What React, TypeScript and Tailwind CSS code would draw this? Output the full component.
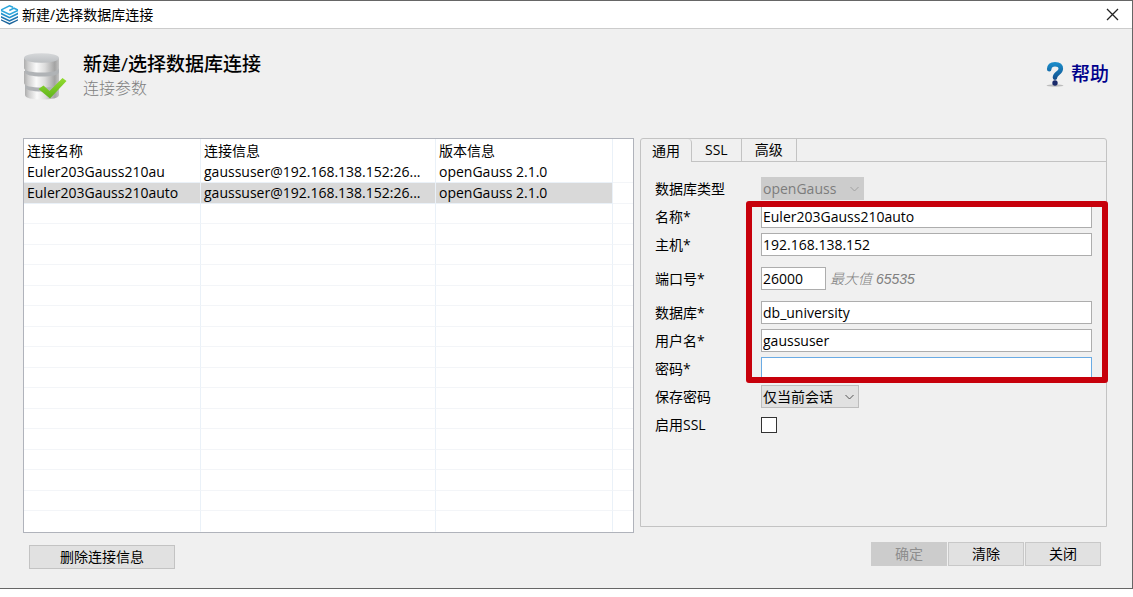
import { useState } from "react";
import type { ReactNode } from "react";

const connections = [
  { name: "Euler203Gauss210au", info: "gaussuser@192.168.138.152:26...", version: "openGauss 2.1.0" },
  { name: "Euler203Gauss210auto", info: "gaussuser@192.168.138.152:26...", version: "openGauss 2.1.0" },
];

const emptyRows = Array.from({ length: 16 }, (_, i) => i);

const inputClass =
  "h-[23px] w-full min-w-0 rounded-none border border-[#adadad] bg-white px-px text-black outline-none";

const LogoIcon = () => (
  <svg width="19" height="20" viewBox="0 0 19 20" fill="none" aria-hidden="true">
    <path d="M1 14.2 9.500 18 18 14.2v1.400L9.500 19.800 1 15.600z" fill="#17629a" />
    <path d="M1 11 9.500 15 18 11v1.700L9.500 16.700 1 12.700z" fill="#1b74b0" />
    <path d="M1 7.600 9.500 11.800 18 7.600v1.800L9.500 13.500 1 9.400z" fill="#2391cb" />
    <path
      d="m13 2.300-3.500-1.500L1.700 4.700v1L9.500 9.500l7.800-3.800v-1l-3.300-1.500-4.700 2.300"
      stroke="#2ba6dc"
      strokeWidth="1.500"
    />
  </svg>
);

const DatabaseIcon = () => (
  <svg width="44" height="50" viewBox="0 0 44 50" aria-hidden="true">
    <defs>
      <linearGradient id="metal" x1="0" x2="1" y1="0" y2="0">
        <stop offset="0" stopColor="#adadad" />
        <stop offset="0.12" stopColor="#cfcfcf" />
        <stop offset="0.35" stopColor="#fafafa" />
        <stop offset="0.6" stopColor="#dcdcdc" />
        <stop offset="0.88" stopColor="#a3a3a3" />
        <stop offset="1" stopColor="#c4c4c4" />
      </linearGradient>
      <linearGradient id="lid" x1="0" x2="0" y1="0" y2="1">
        <stop offset="0" stopColor="#d6d8da" />
        <stop offset="1" stopColor="#bbbec1" />
      </linearGradient>
      <linearGradient id="tick" x1="0" x2="0" y1="0" y2="1">
        <stop offset="0" stopColor="#92dc2f" />
        <stop offset="1" stopColor="#5fb31c" />
      </linearGradient>
    </defs>
    <path d="M2 34v9c0 3 7 4.500 17 4.500S36 46 36 43v-9z" fill="url(#metal)" />
    <path d="M2 31v4c0 3 7 4.500 17 4.500S36 38 36 35v-4z" fill="#b0b3b6" />
    <path d="M1 19v12c0 3 7.500 4.500 17.500 4.500S36 34 36 31V19z" fill="url(#metal)" />
    <path d="M2 15v5c0 3 7 4.500 17 4.500S36 23 36 20v-5z" fill="#b0b3b6" />
    <path d="M1 6v10c0 3 7.500 4.500 17.500 4.500S36 19 36 16V6z" fill="url(#metal)" />
    <ellipse cx="18.500" cy="6" rx="17.500" ry="4.800" fill="url(#lid)" />
    <path d="m15.500 37 5-3.500 6 5.500L39.500 26l4 3L27 46.500z" fill="url(#tick)" />
  </svg>
);

const HelpIcon = () => (
  <svg width="18" height="26" viewBox="0 0 18 26" fill="none" aria-hidden="true">
    <defs>
      <linearGradient id="question" x1="0" x2="0" y1="0" y2="26" gradientUnits="userSpaceOnUse">
        <stop offset="0" stopColor="#1c93cf" />
        <stop offset="0.55" stopColor="#14619f" />
        <stop offset="1" stopColor="#1a2460" />
      </linearGradient>
    </defs>
    <ellipse cx="9" cy="24.500" rx="8.500" ry="1.200" fill="#bcbcbc" />
    <path
      d="M3.200 8.200c.2-3.400 2.700-4.900 5.800-4.900 3.600 0 5.800 1.600 5.800 4.500 0 4.300-5.800 4.400-5.800 8.800"
      stroke="url(#question)"
      strokeWidth="4.600"
      strokeLinecap="round"
    />
    <circle cx="9" cy="22" r="2.700" fill="#1a2a6a" />
  </svg>
);

const Chevron = ({ color }: { color: string }) => (
  <svg
    className="pointer-events-none absolute right-1 top-1/2 -translate-y-1/2"
    width="11"
    height="7"
    viewBox="0 0 11 7"
    fill="none"
    aria-hidden="true"
  >
    <path d="M1.500 1.500 5.500 5.500 9.500 1.500" stroke={color} />
  </svg>
);

const Field = ({ id, label, children }: { id: string; label: string; children: ReactNode }) => (
  <div className="flex min-h-[23px] items-center">
    <label htmlFor={id} className="w-[106px] shrink-0">
      {label}
    </label>
    {children}
  </div>
);

const TitleBar = () => (
  <div className="flex h-7 items-center justify-between border-b border-[#cccccc] bg-white pr-[9px]">
    <div className="flex items-center gap-[3px]">
      <LogoIcon />
      <span>新建/选择数据库连接</span>
    </div>
    <button type="button" aria-label="关闭窗口" className="p-1">
      <svg width="13" height="13" viewBox="0 0 13 13" aria-hidden="true">
        <path d="m1 1 11 11M12 1 1 12" stroke="#222" strokeWidth="1.300" />
      </svg>
    </button>
  </div>
);

const Header = () => (
  <div className="flex h-[109px] items-start justify-between pl-[23px] pr-[23px] pt-[23px]">
    <div className="flex gap-4">
      <DatabaseIcon />
      <div>
        <h1 className="text-[19px] font-medium leading-6 text-black">新建/选择数据库连接</h1>
        <p className="text-base font-light leading-6 text-[#808080]">连接参数</p>
      </div>
    </div>
    <a href="#help" className="mt-2 flex items-center gap-[7px] text-[19px] font-medium leading-7 text-[#00008b]">
      <HelpIcon />
      帮助
    </a>
  </div>
);

const ConnectionTable = () => {
  const [selected, setSelected] = useState(1);

  return (
    <div className="border border-[#b0b3bb] bg-white">
      <table className="w-full table-fixed border-separate border-spacing-0 text-left">
        <colgroup>
          <col className="w-[177px]" />
          <col className="w-[235px]" />
          <col className="w-[177px]" />
          <col />
        </colgroup>
        <thead>
          <tr className="h-[23px]">
            <th className="border-r border-[#eaf1f8] p-0 pl-[3px] font-normal leading-5">连接名称</th>
            <th className="border-r border-[#eaf1f8] p-0 pl-[3px] font-normal leading-5">连接信息</th>
            <th className="border-r border-[#eaf1f8] p-0 pl-[3px] font-normal leading-5">版本信息</th>
            <th className="p-0" />
          </tr>
        </thead>
        <tbody>
          {connections.map((c, i) => (
            <tr
              key={c.name}
              onClick={() => setSelected(i)}
              className={`odd:h-5 even:h-[21px] ${i === selected ? "[&>td:not(:last-child)]:bg-[#d9d9d9]" : ""}`}
            >
              <td className="truncate border-b border-r border-[#eaf1f8] p-0 pl-[3px] leading-5">{c.name}</td>
              <td className="truncate border-b border-r border-[#eaf1f8] p-0 pl-[3px] leading-5">{c.info}</td>
              <td className="truncate border-b border-r border-[#eaf1f8] p-0 pl-[3px] leading-5">{c.version}</td>
              <td className="border-b border-[#f3f5f8] p-0" />
            </tr>
          ))}
          {emptyRows.map((r) => (
            <tr key={r} className="odd:h-5 even:h-[21px] [&:last-child>td]:border-b-transparent">
              <td className="border-b border-r border-b-[#f3f5f8] border-r-[#eaf1f8] p-0" />
              <td className="border-b border-r border-b-[#f3f5f8] border-r-[#eaf1f8] p-0" />
              <td className="border-b border-r border-b-[#f3f5f8] border-r-[#eaf1f8] p-0" />
              <td className="border-b border-[#f3f5f8] p-0" />
            </tr>
          ))}
        </tbody>
      </table>
    </div>
  );
};

const Tabs = () => (
  <div role="tablist" className="flex h-[23px] leading-5">
    <button type="button" role="tab" aria-selected="true" className="rounded-tr-sm border-r border-[#c3c3c3] px-[11px]">
      通用
    </button>
    <button type="button" role="tab" aria-selected="false" className="border-b border-r border-[#c3c3c3] px-[13px]">
      SSL
    </button>
    <button type="button" role="tab" aria-selected="false" className="border-b border-r border-[#c3c3c3] px-[13px]">
      高级
    </button>
    <div className="flex-1 border-b border-[#c3c3c3]" />
  </div>
);

const ConnectionForm = () => (
  <form className="flex flex-col gap-[5px] px-3.5 pt-[15px]">
    <Field id="dbType" label="数据库类型">
      <div className="relative">
        <select
          id="dbType"
          disabled
          className="h-[23px] w-[103px] appearance-none bg-[#cccccc] px-0.5 text-[#7c7c7c] opacity-100"
        >
          <option>openGauss</option>
        </select>
        <Chevron color="#a0a0a0" />
      </div>
    </Field>

    <div className="relative flex flex-col gap-[5px]">
      <Field id="name" label="名称*">
        <input id="name" className={inputClass} defaultValue="Euler203Gauss210auto" />
      </Field>
      <Field id="host" label="主机*">
        <input id="host" className={inputClass} defaultValue="192.168.138.152" />
      </Field>
      <div className="py-1.5">
        <Field id="port" label="端口号*">
          <div className="w-[65px]">
            <input id="port" className={inputClass} defaultValue="26000" />
          </div>
          <span className="pl-1 font-['Liberation_Sans','Noto_Sans_CJK_SC',sans-serif] font-light italic text-[#808080]">
            最大值 65535
          </span>
        </Field>
      </div>
      <Field id="database" label="数据库*">
        <input id="database" className={inputClass} defaultValue="db_university" />
      </Field>
      <Field id="user" label="用户名*">
        <input id="user" className={inputClass} defaultValue="gaussuser" />
      </Field>
      <Field id="password" label="密码*">
        <input
          id="password"
          type="password"
          className="h-[23px] w-full min-w-0 border border-[#6aabe4] bg-white px-px outline-none"
        />
      </Field>
      <div className="pointer-events-none absolute -bottom-[3px] -right-4 -top-1 left-[91px] rounded-[3px] border-[6px] border-[#c7000b]" />
    </div>

    <Field id="savePassword" label="保存密码">
      <div className="relative">
        <select
          id="savePassword"
          className="h-[23px] w-[98px] appearance-none border border-[#bdbdbd] bg-[#e1e1e1] px-px text-black"
        >
          <option>仅当前会话</option>
          <option>永久</option>
        </select>
        <Chevron color="#555555" />
      </div>
    </Field>
    <Field id="enableSsl" label="启用SSL">
      <input id="enableSsl" type="checkbox" className="size-4 appearance-none border border-[#333333] bg-white" />
    </Field>
  </form>
);

export default function App() {
  return (
    <div className="min-h-screen bg-white font-['Open_Sans','Noto_Sans_CJK_SC',sans-serif] text-sm text-black">
      <div className="border-b border-r border-t border-[#666666] bg-[#f0f0f0]">
        <TitleBar />
        <Header />
        <div className="flex gap-1.5 pb-[19px] pl-[23px] pr-[25px]">
          <div className="flex min-w-0 flex-[611] flex-col items-stretch gap-3">
            <ConnectionTable />
            <button
              type="button"
              className="ml-1.5 h-6 w-[146px] border border-[#c3c3c3] bg-[#e1e1e1] leading-5"
            >
              删除连接信息
            </button>
          </div>

          <div className="flex min-w-0 flex-[467] flex-col pb-[3px]">
            <div className="flex-1 rounded-t-[3px] border border-[#c3c3c3]">
              <Tabs />
              <ConnectionForm />
            </div>
            <div className="mt-[15px] flex justify-end gap-px pr-1.5 leading-5">
              <button type="button" disabled className="h-6 w-[76px] bg-[#cccccc] text-[#8e8e8e]">
                确定
              </button>
              <button type="button" className="h-6 w-[76px] border border-[#c8c8c8] bg-[#e1e1e1]">
                清除
              </button>
              <button type="button" className="h-6 w-[76px] border border-[#c8c8c8] bg-[#e1e1e1]">
                关闭
              </button>
            </div>
          </div>
        </div>
      </div>
    </div>
  );
}
